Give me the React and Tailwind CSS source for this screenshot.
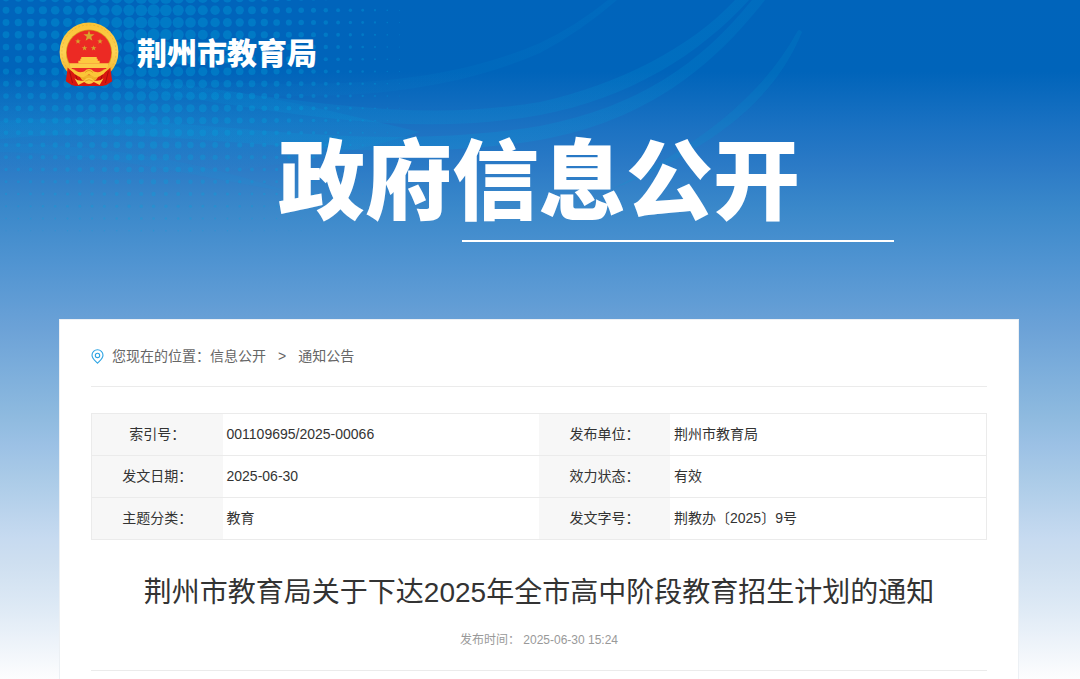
const rows = [
    [{ label: "索引号：", value: "001109695/2025-00066" }, { label: "发布单位：", value: "荆州市教育局" }],
    [{ label: "发文日期：", value: "2025-06-30" }, { label: "效力状态：", value: "有效" }],
    [{ label: "主题分类：", value: "教育" }, { label: "发文字号：", value: "荆教办〔2025〕9号" }],
];

// halftone dots, biggest near the top, fading out to the right and bottom
const dots = [];
for (let row = 0; row < 20; row++) {
    for (let col = 0; col < 34; col++) {
        const x = 6 + col * 12.3;
        const y = -2 + row * 12.25;
        const fx = x < 155 ? 1 - (155 - x) / 340 : 1 - (x - 155) / 270;
        const fy = 1 - Math.pow(Math.max(0, y - 30) / 225, 1.4);
        const r = 6.1 * fx * fy;
        if (r > 0.3) dots.push({ x, y, r, o: 0.26 + 0.08 * fy });
    }
}

const star = (cx, cy, r) => {
    const pts = [];
    for (let i = 0; i < 10; i++) {
        const a = -Math.PI / 2 + (i * Math.PI) / 5;
        const k = i % 2 ? r * 0.4 : r;
        pts.push(`${(cx + k * Math.cos(a)).toFixed(2)},${(cy + k * Math.sin(a)).toFixed(2)}`);
    }
    return pts.join(" ");
};

const Backdrop = () => (
    <svg className="absolute left-0 top-0 -z-10" width="1080" height="320" viewBox="0 0 1080 320" aria-hidden="true">
        <defs>
            <linearGradient id="fadeLeft" x1="0" x2="1">
                <stop offset="0" stopColor="#00a8e0" stopOpacity="0" />
                <stop offset="0.25" stopColor="#00a8e0" stopOpacity="0.14" />
                <stop offset="1" stopColor="#00a0d8" stopOpacity="0.16" />
            </linearGradient>
            <linearGradient id="fadeBoth" x1="0" x2="1">
                <stop offset="0" stopColor="#00a8e0" stopOpacity="0.02" />
                <stop offset="1" stopColor="#00a0d8" stopOpacity="0.1" />
            </linearGradient>
            <linearGradient id="wave" x1="0" x2="1">
                <stop offset="0" stopColor="#00a8e0" stopOpacity="0.1" />
                <stop offset="0.6" stopColor="#00a8e0" stopOpacity="0.18" />
                <stop offset="1" stopColor="#00a0d8" stopOpacity="0.14" />
            </linearGradient>
            <linearGradient id="haze" x1="0" y1="0" x2="0" y2="1">
                <stop offset="0" stopColor="#00a8e0" stopOpacity="0" />
                <stop offset="0.5" stopColor="#00a8e0" stopOpacity="0.16" />
                <stop offset="1" stopColor="#00a8e0" stopOpacity="0" />
            </linearGradient>
        </defs>
        <path d="M0 72C180 72 300 104 420 132C300 170 120 190 0 170Z" fill="url(#haze)" />
        {dots.map((d, i) => (
            <circle key={i} cx={d.x} cy={d.y} r={d.r} fill="#00a4dc" opacity={d.o} />
        ))}
        <path d="M90 78C230 98 400 114 540 53Q580 32 617 0H608Q576 26 540 43C430 90 300 92 90 72Z" fill="url(#fadeBoth)" />
        <path d="M90 78C220 80 380 130 540 102C620 84 690 48 735 0H749C700 54 630 98 540 115C390 142 250 104 90 84Z" fill="url(#fadeLeft)" />
        <path d="M0 121C180 108 340 158 540 126C640 106 700 64 752 0H765C715 64 650 120 540 140C340 172 180 120 0 139Z" fill="url(#wave)" />
        <path d="M0 143C130 146 220 168 290 192C210 180 120 154 0 152Z" fill="#00a8e0" opacity="0.08" />
        <path d="M802 32C776 96 720 146 610 190C700 144 762 96 797 32Q799 28 802 32Z" fill="#00a0d8" opacity="0.14" />
    </svg>
);

const Emblem = () => (
    <svg className="h-[64px] w-[60px] shrink-0" viewBox="0 0 62 66" preserveAspectRatio="none" role="img" aria-label="国徽">
        <defs>
            <linearGradient id="gold" x1="0" y1="0" x2="0" y2="1">
                <stop offset="0" stopColor="#fbc234" />
                <stop offset="0.5" stopColor="#fdd254" />
                <stop offset="1" stopColor="#efad25" />
            </linearGradient>
        </defs>
        <circle cx="31" cy="31" r="30.4" fill="url(#gold)" />
        <circle cx="31" cy="31" r="28" fill="none" stroke="#dfa01f" strokeWidth="1" strokeDasharray="2 2" opacity="0.4" />
        <circle cx="31" cy="31.5" r="23.8" fill="#d99b1d" />
        <circle cx="31" cy="31.5" r="23" fill="#ec2a24" />
        <path d="M9 47Q12 51 19 53L24 60H38L43 53Q50 51 53 47L55 61L49 65L45 66H17L13 65L7 61Z" fill="#d9170f" />
        <path d="M11 51L14 63M51 51L48 63M17 54L19 60M45 54L43 60" stroke="#a90d0b" strokeWidth="1" />
        <polygon points={star(31, 14.5, 6)} fill="#d8a62d" />
        <polygon points={star(19.6, 20, 3)} fill="#d8a62d" />
        <polygon points={star(42.4, 20, 3)} fill="#d8a62d" />
        <polygon points={star(26.4, 27, 3)} fill="#d8a62d" />
        <polygon points={star(35.8, 27, 3)} fill="#d8a62d" />
        <path d="M23 36H39V38H40V40H42V42.5H20V40H22V38H23Z" fill="#fdc83f" />
        <path d="M10.5 42.5H51.5L50 47.5H12Z" fill="#fdcb47" />
        <path d="M12.5 48H49.5" stroke="#ec2a24" strokeWidth="1.2" />
        <path d="M11 46Q18 54 26 51Q31 46 36 51Q44 54 51 46Q47 57 37 57L31 54L25 57Q15 57 11 46Z" fill="#fbc538" />
        <path d="M27 52Q31 48 35 52" stroke="#dd9a1c" strokeWidth="1" fill="none" />
        <path d="M16 58Q21 62 26 60Q31 55 36 60Q41 62 46 58L42 65L36 62Q31 66 26 62L20 65Z" fill="#fccb45" />
        <path d="M27 61Q31 58 35 61" stroke="#dd9a1c" strokeWidth="0.8" fill="none" />
    </svg>
);

const LocationIcon = () => (
    <svg className="mr-2 h-[15px] w-[13px] shrink-0" viewBox="0 0 13 15" fill="none" stroke="#2ba3e3" strokeWidth="1.1" aria-hidden="true">
        <path d="M6.5 14.2C4 11.6 1 9.3 1 6.2A5.5 5.4 0 0 1 12 6.2C12 9.3 9 11.6 6.5 14.2Z" />
        <circle cx="6.5" cy="6.4" r="2.2" />
    </svg>
);

const InfoTable = () => (
    <table className="mt-[26px] w-full table-fixed border-collapse border border-[#ebebeb] text-sm text-[#333]">
        <colgroup>
            <col className="w-[131px]" />
            <col />
            <col className="w-[131px]" />
            <col />
        </colgroup>
        <tbody>
            {rows.map((row) => (
                <tr key={row[0].label} className="h-[42px] border-b border-[#ebebeb]">
                    {row.map((cell) => [
                        <th key={cell.label} scope="row" className="bg-[#f7f7f7] p-0 pb-0.5 text-center font-normal">{cell.label}</th>,
                        <td key={cell.value} className="p-0 pb-0.5 pl-1">{cell.value}</td>,
                    ])}
                </tr>
            ))}
        </tbody>
    </table>
);

const App = () => {
    return (
        <div className="relative isolate min-h-screen overflow-hidden bg-[linear-gradient(to_bottom,#0064bb_0px,#0064ba_72px,#1a71c2_125px,#2b7ac6_165px,#3a88ca_208px,#5295d2_268px,#6ca2d7_329px,#7baddb_368px,#8ebadf_416px,#9cc1e5_446px,#a9cae7_476px,#c6daf0_537px,#cedff0_563px,#dde9f5_606px,#fdfdfe_679px)] pl-[59px] pr-[61px] font-['Liberation_Sans','Noto_Sans_CJK_SC',sans-serif]">
            <Backdrop />
            <div className="mx-auto max-w-[960px]">
                <header>
                    <a href="#" className="flex w-fit items-center gap-[18px] pt-[22px] text-white">
                        <Emblem />
                        <span className="text-[30px] font-black leading-[64px]">荆州市教育局</span>
                    </a>
                    <div className="mt-10 flex flex-col items-center">
                        <h1 className="text-[87px] font-black leading-[114px] text-white">政府信息公开</h1>
                        <div className="ml-[278px] h-[2px] w-[432px] bg-white" />
                    </div>
                </header>

                <main className="mt-[77px] border border-[#ecf0f4] bg-white px-[31px] pb-2">
                    <nav className="flex h-[67px] items-center border-b border-[#ebebeb] pt-1.5 text-sm text-[#666]">
                        <LocationIcon />
                        <span>您现在的位置：</span>
                        <a href="#">信息公开</a>
                        <span className="mx-3">&gt;</span>
                        <a href="#">通知公告</a>
                    </nav>

                    <InfoTable />

                    <article className="text-center">
                        <h2 className="mt-8 text-[28px] leading-[42px] text-[#333]">荆州市教育局关于下达2025年全市高中阶段教育招生计划的通知</h2>
                        <p className="border-b border-[#ebebeb] pb-5 pt-4 text-xs leading-5 text-[#999]">
                            发布时间： <time dateTime="2025-06-30T15:24">2025-06-30 15:24</time>
                        </p>
                    </article>
                </main>
            </div>
        </div>
    );
};

export default App;
